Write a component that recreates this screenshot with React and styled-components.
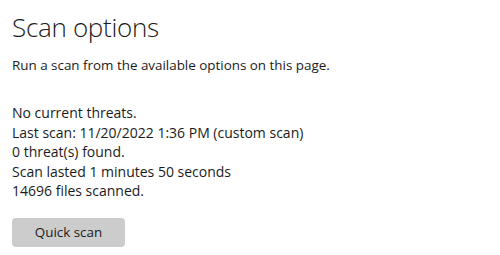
import React from 'react';
import styled, { createGlobalStyle } from 'styled-components';

const GlobalStyle = createGlobalStyle`
  html, body {
    margin: 0;
    padding: 0;
    background: #ffffff;
  }
  body {
    font-family: 'Open Sans', 'Noto Sans', sans-serif;
    color: #1b1b1b;
  }
`;

const Page = styled.div`
  width: 500px;
  height: 255px;
  padding: 10px 12px 0;
  box-sizing: border-box;
`;

const Title = styled.h1`
  margin: 0;
  font-size: 26px;
  font-weight: 300;
  line-height: 34px;
  letter-spacing: -0.3px;
`;

const Subtitle = styled.p`
  margin: 12px 0 0;
  font-size: 13.4px;
  line-height: 18px;
`;

const Status = styled.div`
  margin-top: 29px;
  display: flex;
  flex-direction: column;
`;

const Line = styled.div`
  font-size: 14px;
  line-height: 19.5px;
`;

const Button = styled.button`
  margin-top: 17px;
  width: 113px;
  height: 29px;
  border: none;
  border-radius: 4px;
  background: #cccccc;
  color: #1b1b1b;
  font-family: inherit;
  font-size: 13.4px;
  padding: 0;
  cursor: default;
`;

const lines = [
  'No current threats.',
  'Last scan: 11/20/2022 1:36 PM (custom scan)',
  '0 threat(s) found.',
  'Scan lasted 1 minutes 50 seconds',
  '14696 files scanned.',
];

const App = () => (
  <>
    <GlobalStyle />
    <Page>
      <Title>Scan options</Title>
      <Subtitle>Run a scan from the available options on this page.</Subtitle>
      <Status>
        {lines.map((l) => (
          <Line key={l}>{l}</Line>
        ))}
      </Status>
      <Button>Quick scan</Button>
    </Page>
  </>
);

export default App;
